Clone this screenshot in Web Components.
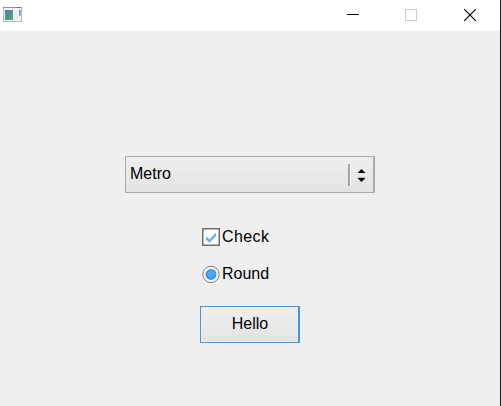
<!DOCTYPE html>
<html lang="en"><head><meta charset="utf-8"><title>Controls</title>
<style>html,body{margin:0;height:100%;overflow:hidden}body{font:16px/18px "Liberation Sans",Arial,sans-serif;color:#000}</style></head>
<body>
<app-window>
<metro-select>Metro</metro-select>
<metro-check>Check</metro-check>
<metro-radio>Round</metro-radio>
<metro-button>Hello</metro-button>
</app-window>
<script>
function define(name, html) {
  customElements.define(name, class extends HTMLElement {
    constructor() { super(); this.attachShadow({mode: "open"}).innerHTML = html; }
  });
}
define("title-bar", `<style>
:host{display:flex;height:31px;background:#fff;flex:none}
svg{display:block;flex:none}.app{margin:6px 0 0 2px}.sp{flex:1}
</style>
<svg class="app" width="21" height="17" viewBox="0 0 21 17">
<defs><linearGradient id="g" x1="0" y1="0" x2="1" y2="1"><stop offset="0" stop-color="#4f7f9d"/><stop offset="1" stop-color="#50aa78"/></linearGradient>
<linearGradient id="b" x1="0" y1="0" x2="0" y2="1"><stop offset="0" stop-color="#5273a5"/><stop offset="1" stop-color="#62b58c"/></linearGradient></defs>
<rect x="1.5" y="1.5" width="18" height="14" fill="#f5f7f7" stroke="#b3b6bb"/>
<path d="M1 1.5H20" stroke="#8e939b"/><path d="M15 1.5h1M17 1.5h1" stroke="#555c68"/>
<rect x="3" y="4" width="8" height="10" fill="url(#g)"/>
<path d="M12 4h4v9h-4z" fill="#e9edf0"/><rect x="17" y="4" width="1.5" height="6" fill="url(#b)"/>
</svg><span class="sp"></span>
<svg width="154" height="31" viewBox="0 0 154 31" fill="none">
<path d="M1 14.5H13" stroke="#000"/>
<rect x="59.5" y="9.5" width="11" height="11" stroke="#ccc"/>
<path d="M118.2 9.2l11.6 11.6M129.8 9.2l-11.6 11.6" stroke="#000" stroke-width="1.15"/>
</svg>`);
define("app-window", `<style>
:host{display:flex;flex-direction:column;box-sizing:border-box;width:501px;height:406px;background:#efefef;border-right:1px solid #1b1b1b}
main{display:flex;flex-direction:column;align-items:center;padding-top:125px}
</style><title-bar></title-bar><main><slot></slot></main>`);
define("metro-select", `<style>
:host{display:flex;box-sizing:border-box;width:250px;height:37px;border:1px solid #aaa;border-right-width:2px;background:linear-gradient(#efefef,#e3e3e3);padding-left:4px}
span{flex:1;padding-top:8px}i{width:2px;height:22px;margin-top:7px;background:#a3a3a3;border-right:1px solid #f8f8f8}
svg{display:block;margin:12px 7px 0 6px}
</style><span><slot></slot></span><i></i>
<svg width="9" height="13" viewBox="0 0 9 13"><path d="M.5 4L4.5 0 8.5 4zM.5 9h8l-4 4z" fill="#080808"/><path d="M1 8.5h7" stroke="#bbb"/></svg>`);
define("metro-check", `<style>
:host{display:flex;width:96px;height:18px;margin-top:35px;gap:2px;letter-spacing:.4px}
svg{display:block}
</style><svg width="18" height="18" viewBox="0 0 18 18"><rect x=".75" y=".75" width="16.5" height="16.5" fill="#fff" stroke="#707070" stroke-width="1.5"/>
<path d="M4 8.3L7.5 11.2 14 4.5V8.3L7.5 14.7 4 11.8z" fill="#6fb0ef"/></svg><span><slot></slot></span>`);
define("metro-radio", `<style>
:host{display:flex;width:96px;height:18px;margin-top:19px;gap:2px}
svg{display:block}
</style><svg width="18" height="18" viewBox="0 0 18 18"><circle cx="9" cy="9.4" r="8.1" fill="#fff" stroke="#777"/><circle cx="9" cy="9.4" r="5.5" fill="#3a92ef"/><circle cx="9" cy="9.2" r="3.7" fill="#4fa4fa"/></svg><span><slot></slot></span>`);
define("metro-button", `<style>
:host{display:flex;box-sizing:border-box;width:100px;height:37px;margin-top:23px;border:1px solid #4395dd;border-right-width:2px;box-shadow:inset 0 0 0 1px #e6f1f5;background:linear-gradient(#efefef,#e3e3e3);justify-content:center;padding:8px 0 0 1px}
</style><slot></slot>`);
</script></body></html>
